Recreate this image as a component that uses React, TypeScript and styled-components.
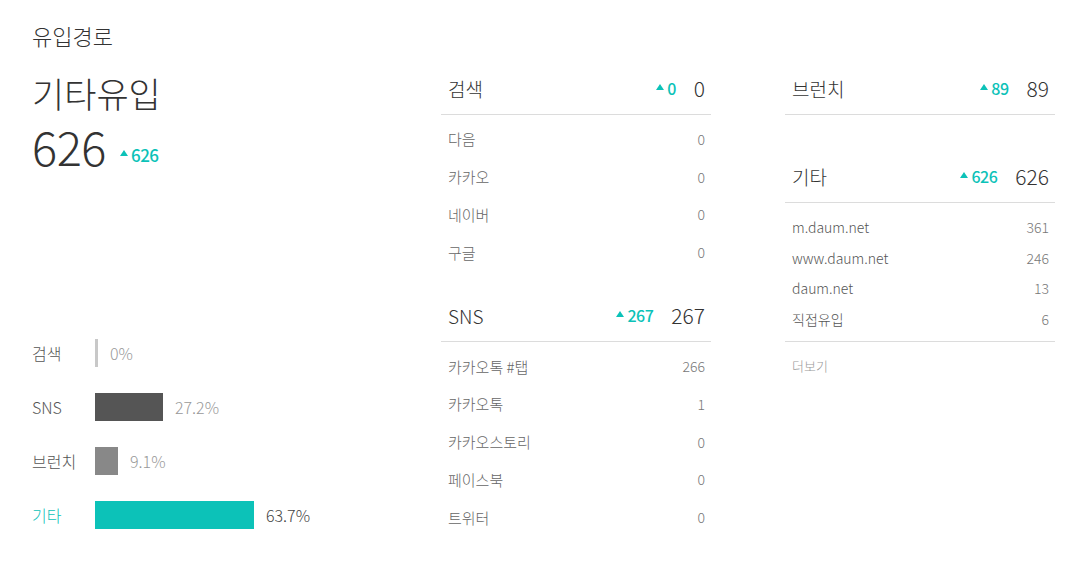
import styled, { createGlobalStyle } from "styled-components";

const TEAL = "#0cc2b8";

const GlobalStyle = createGlobalStyle`
    body {
        margin: 0;
        background: #fff;
        font-family: "Noto Sans CJK KR", "Noto Sans", sans-serif;
        color: #333;
    }
`;

type Item = { label: string; value: number };
type Section = { title: string; diff: number; total: number; items: Item[]; more?: boolean };

const search: Section = {
    title: "검색",
    diff: 0,
    total: 0,
    items: [
        { label: "다음", value: 0 },
        { label: "카카오", value: 0 },
        { label: "네이버", value: 0 },
        { label: "구글", value: 0 },
    ],
};

const sns: Section = {
    title: "SNS",
    diff: 267,
    total: 267,
    items: [
        { label: "카카오톡 #탭", value: 266 },
        { label: "카카오톡", value: 1 },
        { label: "카카오스토리", value: 0 },
        { label: "페이스북", value: 0 },
        { label: "트위터", value: 0 },
    ],
};

const brunch: Section = { title: "브런치", diff: 89, total: 89, items: [] };

const etc: Section = {
    title: "기타",
    diff: 626,
    total: 626,
    items: [
        { label: "m.daum.net", value: 361 },
        { label: "www.daum.net", value: 246 },
        { label: "daum.net", value: 13 },
        { label: "직접유입", value: 6 },
    ],
    more: true,
};

const shares = [
    { label: "검색", pct: 0, color: "#c8c8c8", active: false },
    { label: "SNS", pct: 27.2, color: "#555555", active: false },
    { label: "브런치", pct: 9.1, color: "#888888", active: false },
    { label: "기타", pct: 63.7, color: TEAL, active: true },
];

const Diff: React.FC<{ value: number; size?: number }> = ({ value, size = 16 }) => (
    <DiffText $size={size}>
        <Arrow />
        {value}
    </DiffText>
);

const SectionBlock: React.FC<{ data: Section; dense?: boolean }> = ({ data, dense }) => (
    <SectionBox>
        <SectionHead>
            <SectionTitle>{data.title}</SectionTitle>
            <Diff value={data.diff} />
            <SectionTotal>{data.total}</SectionTotal>
        </SectionHead>
        {data.items.length > 0 && (
            <List $dense={dense}>
                {data.items.map((it) => (
                    <Row key={it.label} $dense={dense}>
                        <RowLabel $dense={dense}>{it.label}</RowLabel>
                        <RowValue>{it.value}</RowValue>
                    </Row>
                ))}
            </List>
        )}
        {data.more && <More>더보기</More>}
    </SectionBox>
);

const App: React.FC = () => (
    <Page>
        <GlobalStyle />
        <PageTitle>유입경로</PageTitle>
        <Columns>
            <Summary>
                <BigLabel>기타유입</BigLabel>
                <BigLine>
                    <BigNumber>626</BigNumber>
                    <Diff value={626} size={17} />
                </BigLine>
                <Bars>
                    {shares.map((s) => (
                        <BarRow key={s.label}>
                            <BarLabel $active={s.active}>{s.label}</BarLabel>
                            <Bar
                                $color={s.color}
                                style={{ width: s.pct === 0 ? 3 : Math.round(s.pct * 2.5) }}
                            />
                            <BarPct $active={s.active}>{s.pct}%</BarPct>
                        </BarRow>
                    ))}
                </Bars>
            </Summary>
            <Column>
                <SectionBlock data={search} />
                <SectionBlock data={sns} />
            </Column>
            <Column>
                <SectionBlock data={brunch} />
                <Spacer />
                <SectionBlock data={etc} dense />
            </Column>
        </Columns>
    </Page>
);

const Page = styled.div`
    padding: 20px 0 0 32px;
    width: 1075px;
    box-sizing: border-box;
`;

const PageTitle = styled.h2`
    margin: 0;
    font-size: 22px;
    font-weight: 300;
    line-height: 30px;
    color: #333;
`;

const Columns = styled.div`
    display: flex;
    gap: 74px;
    margin-top: 14px;
`;

const Summary = styled.div`
    flex: 0 0 335px;
    display: flex;
    flex-direction: column;
`;

const BigLabel = styled.div`
    margin-top: 4px;
    font-size: 35px;
    line-height: 50px;
    font-weight: 300;
    color: #333;
`;

const BigLine = styled.div`
    display: flex;
    align-items: center;
    gap: 14px;
    height: 56px;
`;

const BigNumber = styled.span`
    font-size: 47px;
    line-height: 56px;
    font-weight: 300;
    color: #333;
    letter-spacing: -0.5px;
`;

const DiffText = styled.span<{ $size: number }>`
    display: inline-flex;
    align-items: center;
    font-size: ${(p) => p.$size}px;
    font-weight: 500;
    color: ${TEAL};
    letter-spacing: -0.5px;
    ${BigLine} & {
        margin-top: 16px;
    }
`;

const Arrow = styled.span`
    width: 0;
    height: 0;
    border-left: 4px solid transparent;
    border-right: 4px solid transparent;
    border-bottom: 6px solid ${TEAL};
    margin-right: 3px;
    margin-bottom: 2px;
`;

const Bars = styled.div`
    margin-top: 152px;
    display: flex;
    flex-direction: column;
`;

const BarRow = styled.div`
    display: flex;
    align-items: center;
    height: 54px;
`;

const BarLabel = styled.span<{ $active: boolean }>`
    width: 63px;
    font-size: 16px;
    font-weight: 300;
    color: ${(p) => (p.$active ? TEAL : "#555")};
`;

const Bar = styled.div<{ $color: string }>`
    height: 28px;
    background: ${(p) => p.$color};
`;

const BarPct = styled.span<{ $active: boolean }>`
    margin-left: 12px;
    font-size: 16px;
    font-weight: 300;
    color: ${(p) => (p.$active ? "#444" : "#999")};
`;

const Column = styled.div`
    flex: 0 0 270px;
    display: flex;
    flex-direction: column;
`;

const SectionBox = styled.div`
    display: flex;
    flex-direction: column;
    margin-bottom: 20px;
`;

const SectionHead = styled.div`
    display: flex;
    align-items: center;
    height: 48px;
    padding: 0 6px 2px 7px;
    border-bottom: 1px solid #dcdcdc;
`;

const SectionTitle = styled.span`
    flex: 1;
    font-size: 19px;
    font-weight: 300;
    color: #333;
`;

const SectionTotal = styled.span`
    margin-left: 18px;
    font-size: 21px;
    font-weight: 300;
    color: #333;
`;

const List = styled.div<{ $dense?: boolean }>`
    display: flex;
    flex-direction: column;
    padding: ${(p) => (p.$dense ? "9px 0 7px" : "5px 0 0")};
    border-bottom: ${(p) => (p.$dense ? "1px solid #dcdcdc" : "none")};
`;

const Row = styled.div<{ $dense?: boolean }>`
    display: flex;
    align-items: center;
    justify-content: space-between;
    height: ${(p) => (p.$dense ? "30.5px" : "37.8px")};
    padding: 0 6px 0 7px;
`;

const RowLabel = styled.span<{ $dense?: boolean }>`
    font-size: ${(p) => (p.$dense ? "14px" : "15px")};
    font-weight: 300;
    color: ${(p) => (p.$dense ? "#555" : "#666")};
`;

const RowValue = styled.span`
    font-size: 14px;
    font-weight: 300;
    color: #777;
`;

const More = styled.div`
    padding: 14px 7px 0;
    font-size: 13px;
    font-weight: 300;
    color: #999;
`;

const Spacer = styled.div`
    height: 17px;
`;

export default App;
